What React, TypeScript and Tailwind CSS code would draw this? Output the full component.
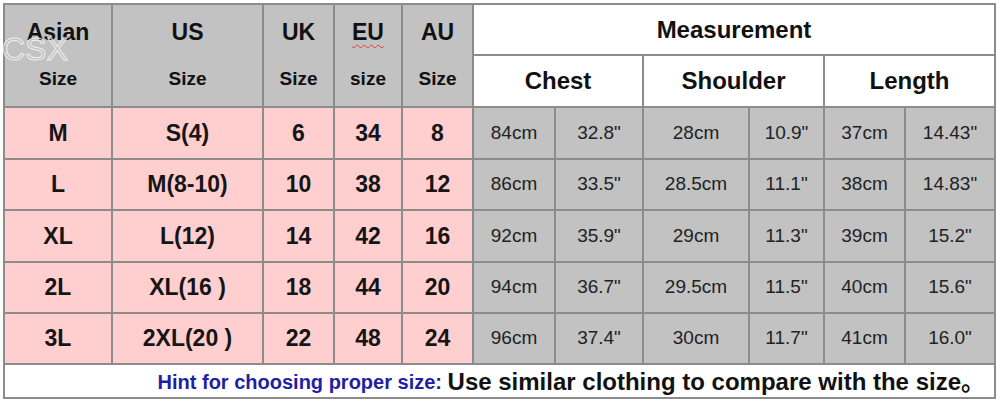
import React from 'react';

const rows = [
  { size: ['M', 'S(4)', '6', '34', '8'], meas: ['84cm', '32.8"', '28cm', '10.9"', '37cm', '14.43"'] },
  { size: ['L', 'M(8-10)', '10', '38', '12'], meas: ['86cm', '33.5"', '28.5cm', '11.1"', '38cm', '14.83"'] },
  { size: ['XL', 'L(12)', '14', '42', '16'], meas: ['92cm', '35.9"', '29cm', '11.3"', '39cm', '15.2"'] },
  { size: ['2L', 'XL(16 )', '18', '44', '20'], meas: ['94cm', '36.7"', '29.5cm', '11.5"', '40cm', '15.6"'] },
  { size: ['3L', '2XL(20 )', '22', '48', '24'], meas: ['96cm', '37.4"', '30cm', '11.7"', '41cm', '16.0"'] },
];

const heads = [
  { top: 'Asian', bottom: 'Size' },
  { top: 'US', bottom: 'Size' },
  { top: 'UK', bottom: 'Size' },
  { top: 'EU', bottom: 'size', wavy: true },
  { top: 'AU', bottom: 'Size' },
];

export default function App() {
  return (
    <div className="relative w-[1000px] h-[404px] bg-white overflow-hidden font-['Liberation_Sans',Arial,'Noto_Sans_CJK_SC',sans-serif]">
      <div className="ml-[3px] mt-[3px] w-[993px] bg-[#8c8c8c] p-[2px] grid gap-[2px] grid-cols-[106px_149px_69px_66px_69px_80px_86px_104px_73px_79px_88px] grid-rows-[49px_50px_50px_49px_50px_49px_49px_32px]">
        {/* size system headers */}
        {heads.map((h) => (
          <div key={h.top} className="row-span-2 bg-[#c2c2c2] flex flex-col text-[#111] font-bold">
            <div className="flex-1 flex items-center justify-center pt-[3px] text-[23px]">
              {h.wavy ? (
                <span className="underline decoration-wavy decoration-[#e03a3a] decoration-1 underline-offset-[4px]">{h.top}</span>
              ) : (
                h.top
              )}
            </div>
            <div className="flex-1 flex items-center justify-center pb-[3px] text-[19px]">{h.bottom}</div>
          </div>
        ))}

        <div className="col-span-6 bg-white flex items-center justify-center text-[24px] font-bold text-[#111]">
          Measurement
        </div>
        {['Chest', 'Shoulder', 'Length'].map((m) => (
          <div key={m} className="col-span-2 bg-white flex items-center justify-center text-[24px] font-bold text-[#111]">
            {m}
          </div>
        ))}

        {rows.map((r) => (
          <React.Fragment key={r.size[0]}>
            {r.size.map((s, i) => (
              <div key={'s' + i} className="bg-[#ffcfcf] flex items-center justify-center text-[23px] font-bold text-[#151515] whitespace-pre">
                {s}
              </div>
            ))}
            {r.meas.map((m, i) => (
              <div key={'m' + i} className="bg-[#c2c2c2] flex items-center justify-center text-[19px] text-[#222]">
                {m}
              </div>
            ))}
          </React.Fragment>
        ))}

        {/* hint row */}
        <div className="col-span-11 bg-white flex items-center justify-end pr-[9px] pt-[2px] font-bold whitespace-nowrap">
          <span className="text-[20px] text-[#1f1fa5]">Hint for choosing proper size:&nbsp;</span>
          <span className="text-[24px] text-[#111]">Use similar clothing to compare with the size。</span>
        </div>
      </div>

      {/* watermark */}
      <span className="absolute left-[2px] top-[33px] text-[32px] leading-none text-transparent [-webkit-text-stroke:1px_#eeeeee] pointer-events-none">
        CSX
      </span>
    </div>
  );
}
